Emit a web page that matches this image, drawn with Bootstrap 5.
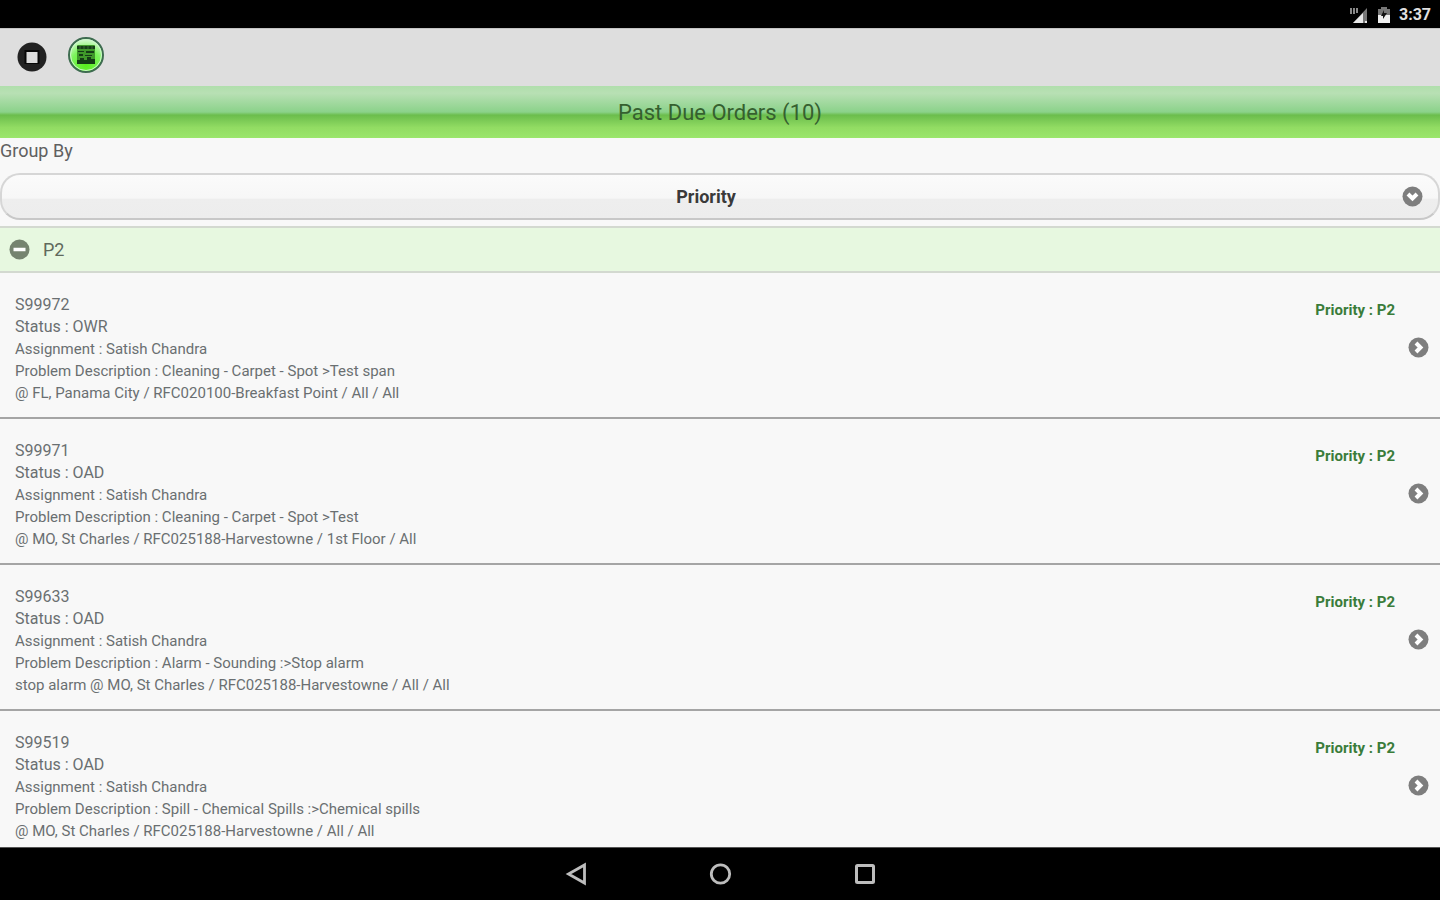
<!DOCTYPE html>
<html lang="en">
<head>
<meta charset="utf-8">
<meta name="viewport" content="width=device-width, initial-scale=1">
<title>Past Due Orders</title>
<link href="https://cdn.jsdelivr.net/npm/bootstrap@5.3.0/dist/css/bootstrap.min.css" rel="stylesheet">
<style>
body { font-family: Roboto, "Liberation Sans", sans-serif; font-size: 18px; line-height: 24px; color: #4a4a4a; background: #f8f8f8; }
svg { display: block; }
.status-bar { height: 28px; padding: 2px 9px 0 0; background: #000; color: #e0e0e0; font-size: 16px; gap: 8px; }
.tool-bar { height: 58px; padding: 0 17px 2px; gap: 20px; background: #dedede; border-top: 1px solid #c4c4c4; }
.tool-bar .btn-app { margin-bottom: 4px; }
.page-title { height: 52px; margin: 0; font-size: 22px; line-height: 54px; font-weight: 400; color: #35602f;
  background: linear-gradient(#b0dfac 0, #b8e0b4 14%, #8bd28a 50%, #6bbd4c 56%, #92dc63 80%, #9be66c 100%); }
.group-label { padding-top: 1px; margin-bottom: 10px; color: #606060; }
.group-select { height: 47px; padding: 0 54px 0 26px; appearance: none; border: 2px solid #d6d6d6; border-bottom-color: #c8c8c8; border-radius: 20px; font-size: 18px; font-weight: 700; color: #3a3a3a; text-align: center; text-align-last: center;
  background: linear-gradient(#fbfbfb, #f7f7f7 54%, #eeeeee 56%, #ededed); }
.select-mark { position: absolute; right: 17px; top: 13px; pointer-events: none; }
.group-head { height: 47px; margin-top: 6px; padding: 0 9px; gap: 13px; background: #e7f8e0; color: #60695c; border: 0; border-top: 2px solid #d3d9d0; border-bottom: 2px solid #d3d9d0; }
.order { padding: 21px 11px 13px 15px; border-bottom: 2px solid #a5a5a5; color: #6a6f71; font-size: 15px; line-height: 22px; gap: 13px; height: 146px; }
.order:hover, .order:focus { background: #f0f0f0; color: #6a6f71; }
.order-head { font-size: 16px; }
.order-priority { margin-top: 5px; font-weight: 700; color: #3a7c3a; }
.order-go { margin-bottom: 4px; }
.nav-keys { height: 53px; gap: 120px; background: #000; border-top: 1px solid #555; color: #bdbdbd; }
</style>
</head>
<body class="vh-100 d-flex flex-column overflow-hidden">

<div class="status-bar d-flex align-items-center justify-content-end flex-shrink-0">
  <svg width="20" height="18" viewBox="0 0 20 18" aria-label="Signal"><path d="M18 2V17H4z" fill="#777"/><path d="M14 7v10H4zM16 15h2v2h-2z" fill="#e8e8e8"/><path d="M2 2v6M5 2v6M8 2v5" stroke="#888" stroke-width="2"/></svg>
  <svg width="14" height="18" viewBox="0 0 14 18" aria-label="Battery"><path d="M4 1h6v2h3v14H1V3h3z" fill="#777"/><path d="M1 9h12v8H1z" fill="#efefef"/><path d="M7 4l-3 6h2v3l4-6H7z" fill="#111"/></svg>
  <span class="fw-bold">3:37</span>
</div>

<header class="flex-shrink-0">
  <div class="tool-bar d-flex align-items-center">
    <button type="button" class="btn p-0 border-0" aria-label="Stop">
      <svg width="30" height="30" viewBox="0 0 30 30"><circle cx="15" cy="15" r="14.5" fill="#222"/><rect x="7.500" y="8" width="15" height="14" fill="#080808"/><rect x="9.500" y="10" width="11" height="11" fill="#dcdcdc"/></svg>
    </button>
    <button type="button" class="btn btn-app p-0 border-0" aria-label="Scan code">
      <svg width="38" height="38" viewBox="0 0 38 38">
        <defs><radialGradient id="lime" cx="50%" cy="80%" r="75%"><stop offset="0" stop-color="#58f01c"/><stop offset=".6" stop-color="#7cf35c"/><stop offset="1" stop-color="#d2f9cd"/></radialGradient></defs>
        <circle cx="19" cy="19" r="17" fill="url(#lime)" stroke="#3e6c50" stroke-width="2"/><circle cx="19" cy="19" r="15.500" fill="none" stroke="#cbf7c9"/>
        <rect x="10" y="9" width="18" height="19" rx="1" fill="#3f982a"/>
        <path d="M10 10h18v3H10zM11 15h6v1h-6zM19 15h8v2h-8zM12 18h4v2h-4zM18 19h7v1h-7zM10 24h3v-2h4v2h3v-3h4v2h4v5H10z" fill="#153d16"/>
        <path d="M13 10v3M17 10v3M21 10v3M25 10v3" stroke="#3b6d35"/>
      </svg>
    </button>
  </div>
  <h1 class="page-title text-center">Past Due Orders (10)</h1>
</header>

<main class="flex-grow-1 overflow-hidden">
  <label class="group-label d-block" for="groupBy">Group By</label>
  <div class="position-relative">
    <select id="groupBy" class="group-select w-100 d-block">
      <option>Priority</option>
    </select>
    <svg class="select-mark" width="21" height="21" viewBox="0 0 21 21"><circle cx="10.500" cy="10.500" r="10" fill="#7e7e7e"/><path d="M6 8l4.500 4.500L15 8" fill="none" stroke="#fff" stroke-width="4"/></svg>
  </div>

  <button type="button" class="group-head d-flex align-items-center w-100 text-start" data-bs-toggle="collapse" data-bs-target="#ordersP2" aria-expanded="true" aria-controls="ordersP2">
    <svg width="21" height="21" viewBox="0 0 21 21"><circle cx="10.500" cy="10.500" r="10" fill="#75836f"/><path d="M4.500 10.500h12" stroke="#fff" stroke-width="3.500"/></svg>
    <span>P2</span>
  </button>

  <div id="ordersP2" class="collapse show">
    <a href="#S99972" class="order d-flex text-decoration-none">
      <div class="flex-grow-1">
        <div class="order-head">S99972<br>Status : OWR</div>
        <div>Assignment : Satish Chandra</div>
        <div>Problem Description : Cleaning - Carpet - Spot &gt;Test span</div>
        <div>@ FL, Panama City / RFC020100-Breakfast Point / All / All</div>
      </div>
      <div class="order-priority">Priority : P2</div>
      <svg class="order-go align-self-center" width="21" height="21" viewBox="0 0 21 21"><circle cx="10.500" cy="10.500" r="10" fill="#7e7e7e"/><path d="M8 6l4.500 4.500L8 15" fill="none" stroke="#fff" stroke-width="4"/></svg>
    </a>
    <a href="#S99971" class="order d-flex text-decoration-none">
      <div class="flex-grow-1">
        <div class="order-head">S99971<br>Status : OAD</div>
        <div>Assignment : Satish Chandra</div>
        <div>Problem Description : Cleaning - Carpet - Spot &gt;Test</div>
        <div>@ MO, St Charles / RFC025188-Harvestowne / 1st Floor / All</div>
      </div>
      <div class="order-priority">Priority : P2</div>
      <svg class="order-go align-self-center" width="21" height="21" viewBox="0 0 21 21"><circle cx="10.500" cy="10.500" r="10" fill="#7e7e7e"/><path d="M8 6l4.500 4.500L8 15" fill="none" stroke="#fff" stroke-width="4"/></svg>
    </a>
    <a href="#S99633" class="order d-flex text-decoration-none">
      <div class="flex-grow-1">
        <div class="order-head">S99633<br>Status : OAD</div>
        <div>Assignment : Satish Chandra</div>
        <div>Problem Description : Alarm - Sounding :&gt;Stop alarm</div>
        <div>stop alarm @ MO, St Charles / RFC025188-Harvestowne / All / All</div>
      </div>
      <div class="order-priority">Priority : P2</div>
      <svg class="order-go align-self-center" width="21" height="21" viewBox="0 0 21 21"><circle cx="10.500" cy="10.500" r="10" fill="#7e7e7e"/><path d="M8 6l4.500 4.500L8 15" fill="none" stroke="#fff" stroke-width="4"/></svg>
    </a>
    <a href="#S99519" class="order d-flex text-decoration-none">
      <div class="flex-grow-1">
        <div class="order-head">S99519<br>Status : OAD</div>
        <div>Assignment : Satish Chandra</div>
        <div>Problem Description : Spill - Chemical Spills :&gt;Chemical spills</div>
        <div>@ MO, St Charles / RFC025188-Harvestowne / All / All</div>
      </div>
      <div class="order-priority">Priority : P2</div>
      <svg class="order-go align-self-center" width="21" height="21" viewBox="0 0 21 21"><circle cx="10.500" cy="10.500" r="10" fill="#7e7e7e"/><path d="M8 6l4.500 4.500L8 15" fill="none" stroke="#fff" stroke-width="4"/></svg>
    </a>
  </div>
</main>

<nav class="nav-keys d-flex align-items-center justify-content-center flex-shrink-0" aria-label="System">
  <button type="button" class="btn p-0 border-0 text-reset" aria-label="Back"><svg width="24" height="24" viewBox="0 0 24 24"><path d="M20.500 3v18L4.500 12z" fill="none" stroke="currentColor" stroke-width="2.800"/></svg></button>
  <button type="button" class="btn p-0 border-0 text-reset" aria-label="Home"><svg width="24" height="24" viewBox="0 0 24 24"><circle cx="12.500" cy="12" r="9.200" fill="none" stroke="currentColor" stroke-width="2.800"/></svg></button>
  <button type="button" class="btn p-0 border-0 text-reset" aria-label="Recent apps"><svg width="24" height="24" viewBox="0 0 24 24"><rect x="4.500" y="3.500" width="17" height="17" rx="1" fill="none" stroke="currentColor" stroke-width="3"/></svg></button>
</nav>

<script src="https://cdn.jsdelivr.net/npm/bootstrap@5.3.0/dist/js/bootstrap.bundle.min.js"></script>
</body>
</html>
